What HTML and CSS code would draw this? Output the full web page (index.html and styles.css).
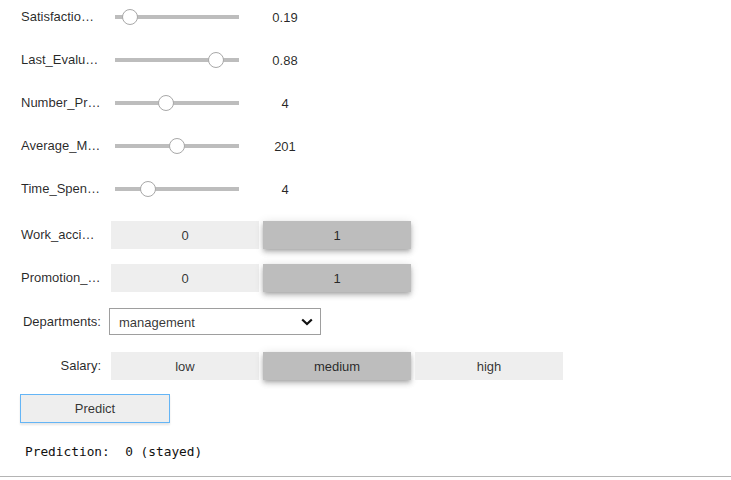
FILE: index.html
```html
<!DOCTYPE html>
<html>
<head>
<meta charset="utf-8">
<link rel="stylesheet" href="styles.css">
</head>
<body>
<div class="app">
  <div class="row slider-row first">
    <div class="label" title="Satisfaction_Level">Satisfactio…</div>
    <div class="slider"><div class="track"></div><div class="thumb" style="left:15px"></div></div>
    <div class="readout">0.19</div>
  </div>
  <div class="row slider-row">
    <div class="label" title="Last_Evaluation">Last_Evalu…</div>
    <div class="slider"><div class="track"></div><div class="thumb" style="left:101px"></div></div>
    <div class="readout">0.88</div>
  </div>
  <div class="row slider-row">
    <div class="label" title="Number_Projects">Number_Pr…</div>
    <div class="slider"><div class="track"></div><div class="thumb" style="left:51px"></div></div>
    <div class="readout">4</div>
  </div>
  <div class="row slider-row">
    <div class="label" title="Average_Monthly_Hours">Average_M…</div>
    <div class="slider"><div class="track"></div><div class="thumb" style="left:62px"></div></div>
    <div class="readout">201</div>
  </div>
  <div class="row slider-row">
    <div class="label" title="Time_Spent_Company">Time_Spen…</div>
    <div class="slider"><div class="track"></div><div class="thumb" style="left:33px"></div></div>
    <div class="readout">4</div>
  </div>
  <div class="row toggle-row first-toggle">
    <div class="label" title="Work_accident">Work_acci…</div>
    <div class="toggles">
      <button class="tb">0</button>
      <button class="tb active">1</button>
    </div>
  </div>
  <div class="row toggle-row">
    <div class="label" title="Promotion_Last_5Years">Promotion_…</div>
    <div class="toggles">
      <button class="tb">0</button>
      <button class="tb active">1</button>
    </div>
  </div>
  <div class="row dropdown-row">
    <div class="label right">Departments:</div>
    <div class="dropdown">
      <span class="dd-text">management</span>
      <svg class="chevron" width="12" height="8" viewBox="0 0 12 8"><path d="M1.2 1.5 L6 6 L10.8 1.5" fill="none" stroke="#111" stroke-width="2.2"/></svg>
    </div>
  </div>
  <div class="row toggle-row salary-row">
    <div class="label right">Salary:</div>
    <div class="toggles">
      <button class="tb">low</button>
      <button class="tb active">medium</button>
      <button class="tb">high</button>
    </div>
  </div>
  <div class="predict-row">
    <button class="predict">Predict</button>
  </div>
  <div class="output">Prediction:  0 (stayed)</div>
  <div class="divider"></div>
</div>
</body>
</html>
```

FILE: styles.css
```css
html, body {
  margin: 0;
  padding: 0;
  background: #ffffff;
}

.app {
  display: flex;
  flex-direction: column;
  font-family: "Liberation Sans", Arial, sans-serif;
  font-size: 13px;
  color: rgba(0, 0, 0, 0.8);
}

.row {
  display: flex;
  align-items: center;
  height: 28px;
  margin-left: 21px;
  margin-top: 15px;
}

.row.first {
  margin-top: 3px;
}

.label {
  width: 80px;
  flex: none;
  text-align: left;
  white-space: nowrap;
  line-height: 28px;
  color: rgba(0, 0, 0, 0.85);
}

.label.right {
  text-align: right;
}

.slider {
  position: relative;
  width: 124px;
  height: 28px;
  margin-left: 14px;
  flex: none;
}

.track {
  position: absolute;
  left: 0;
  right: 0;
  top: 12px;
  height: 4px;
  background: #bdbdbd;
}

.thumb {
  position: absolute;
  top: 6px;
  width: 16px;
  height: 16px;
  margin-left: -8px;
  box-sizing: border-box;
  border: 1px solid #a8a8a8;
  border-radius: 50%;
  background: #ffffff;
}

.readout {
  width: 92px;
  flex: none;
  text-align: center;
  color: rgba(0, 0, 0, 0.85);
}

.toggle-row.first-toggle {
  margin-top: 18px;
}

.toggles {
  display: flex;
  gap: 4px;
  margin-left: 10px;
}

.tb {
  width: 148px;
  height: 28px;
  border: none;
  margin: 0;
  padding: 0;
  background: #eeeeee;
  font-family: "Liberation Sans", Arial, sans-serif;
  font-size: 13px;
  color: rgba(0, 0, 0, 0.8);
}

.tb.active {
  background: #bdbdbd;
  box-shadow: 0 4px 5px 0 rgba(0, 0, 0, 0.14), 0 1px 10px 0 rgba(0, 0, 0, 0.12), 0 2px 4px -1px rgba(0, 0, 0, 0.2);
}

.dropdown-row {
  margin-top: 16px;
  height: 27px;
}

.dropdown {
  display: flex;
  align-items: center;
  justify-content: space-between;
  box-sizing: border-box;
  width: 212px;
  height: 27px;
  margin-left: 8px;
  padding: 1px 7px 0 9px;
  border: 1px solid #9e9e9e;
  background: #ffffff;
}

.dd-text {
  color: rgba(0, 0, 0, 0.8);
}

.chevron {
  display: block;
}

.salary-row {
  margin-top: 17px;
}

.predict-row {
  display: flex;
  margin-top: 14px;
  margin-left: 20px;
}

.predict {
  width: 150px;
  height: 29px;
  margin: 0;
  padding: 0;
  border: 1px solid #64b5f6;
  background: #eeeeee;
  font-family: "Liberation Sans", Arial, sans-serif;
  font-size: 13px;
  color: rgba(0, 0, 0, 0.8);
  box-shadow: 0 2px 2px 0 rgba(0, 0, 0, 0.1);
}

.output {
  margin-top: 21px;
  margin-left: 25px;
  height: 16px;
  line-height: 16px;
  font-family: "DejaVu Sans Mono", monospace;
  font-size: 12.8px;
  white-space: pre;
  color: #111111;
}

.divider {
  margin-top: 16px;
  height: 1px;
  background: #b4b4b4;
}
```
